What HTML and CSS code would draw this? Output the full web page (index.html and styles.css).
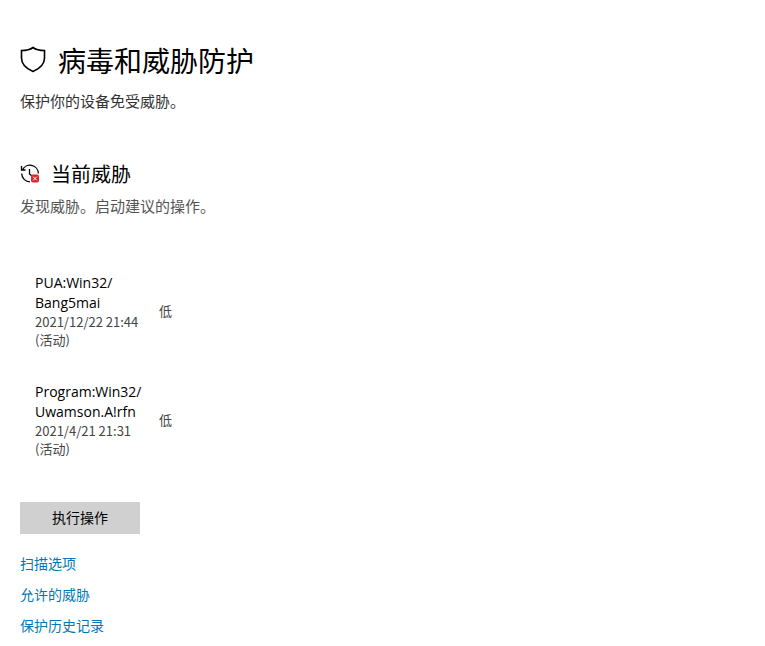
FILE: index.html
```html
<!DOCTYPE html>
<html lang="zh-CN">
  <head>
    <meta charset="UTF-8" />
    <meta name="viewport" content="width=device-width, initial-scale=1.0" />
    <title>病毒和威胁防护</title>
    <link rel="stylesheet" href="styles.css">
  </head>

  <body>
    <header>
      <div class="page-title">
        <svg class="shield-icon" viewBox="0 0 26 28" aria-hidden="true">
          <path d="M13 1.500C10 3.800 6 4.500 1.500 4.500V12C1.500 18.500 6 22.500 13 25.500C20 22.500 24.500 18.500 24.500 12V4.500C20 4.500 16 3.800 13 1.500Z" />
        </svg>
        <h1>病毒和威胁防护</h1>
      </div>
      <p class="subtitle">保护你的设备免受威胁。</p>
    </header>

    <main>
      <section class="threats">
        <div class="section-title">
          <svg class="history-icon" viewBox="0 0 20 20" aria-hidden="true">
            <path d="M1.500 2V6H5.500M2.500 5.940A8.300 8.300 0 0 1 18.300 9.500M1.700 9.500A8.300 8.300 0 0 0 10 17.800M9.500 5V10L12 12" />
            <rect class="badge" x="11" y="10.500" width="8" height="8" rx="2" />
            <path class="cross" d="M13.200 12.700L16.800 16.300M16.800 12.700L13.200 16.300" />
          </svg>
          <h2>当前威胁</h2>
        </div>
        <p class="description">发现威胁。启动建议的操作。</p>

        <table class="threat-table">
          <tbody>
            <tr>
              <td>
                <div class="threat-name">PUA:Win32/<wbr>Bang5mai</div>
                <div class="threat-date">2021/12/22 21:44 (活动)</div>
              </td>
              <td class="severity">低</td>
            </tr>
            <tr>
              <td>
                <div class="threat-name">Program:Win32/<wbr>Uwamson.A!rfn</div>
                <div class="threat-date">2021/4/21 21:31 (活动)</div>
              </td>
              <td class="severity">低</td>
            </tr>
          </tbody>
        </table>

        <button class="action-btn" type="button">执行操作</button>
      </section>

      <nav class="links">
        <a href="#">扫描选项</a>
        <a href="#">允许的威胁</a>
        <a href="#">保护历史记录</a>
      </nav>
    </main>
  </body>
</html>
```

FILE: styles.css
```css
* {
  box-sizing: border-box;
  margin: 0;
  padding: 0;
}

body {
  padding: 40px 20px 0;
  font-family: "Open Sans", "Noto Sans CJK SC", sans-serif;
  font-size: 14px;
  line-height: 20px;
  background-color: #fff;
  color: #000;
}

h1,
h2 {
  font-family: "Noto Sans CJK SC", sans-serif;
  font-weight: 400;
}

h1 {
  font-size: 28px;
  line-height: 40px;
}

h2 {
  font-size: 20px;
  line-height: 28px;
}

.page-title,
.section-title {
  display: flex;
  align-items: center;
}

.page-title {
  gap: 12px;
}

.section-title {
  gap: 11px;
}

.shield-icon,
.history-icon {
  flex: none;
  fill: none;
  stroke: #000;
}

.shield-icon {
  width: 26px;
  height: 28px;
  stroke-width: 1.6;
}

.history-icon {
  width: 20px;
  height: 20px;
  stroke-width: 1.3;
}

.history-icon .badge {
  fill: #d9272e;
  stroke: none;
}

.history-icon .cross {
  stroke: #fff;
  stroke-width: 1;
}

.subtitle,
.description {
  font-size: 15px;
}

.subtitle {
  margin-top: 11px;
  color: #333;
}

.description {
  margin-top: 8px;
  color: #555;
}

.threats {
  margin-top: 49px;
}

.threat-table {
  margin-top: 41px;
  border-collapse: collapse;
}

.threat-table td {
  padding: 16px 0 17px 15px;
  vertical-align: middle;
}

.threat-table td:first-child {
  width: 124px;
}

.threat-date,
.threat-table .severity {
  font-family: "Noto Sans CJK SC", sans-serif;
  font-size: 13px;
  line-height: 18px;
  color: #444;
}

.action-btn {
  display: block;
  width: 120px;
  height: 32px;
  margin-top: 27px;
  font: inherit;
  background-color: #d0d0d0;
  color: #000;
  border: none;
  cursor: pointer;
}

.links {
  display: flex;
  flex-direction: column;
  align-items: flex-start;
  gap: 11px;
  margin-top: 20px;
}

.links a {
  color: #0078b8;
  text-decoration: none;
}
```
